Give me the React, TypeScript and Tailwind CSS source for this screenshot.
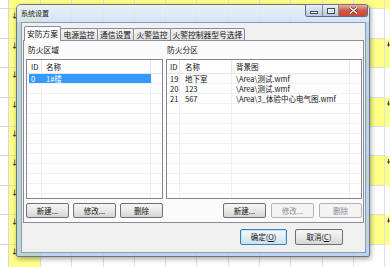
import React from 'react';

const CJK = "font-['Noto_Sans_CJK_SC','Noto_Sans',sans-serif]";

const partRows = [
  { id: '19', name: '地下室', bg: '\\Area\\测试.wmf' },
  { id: '20', name: '123', bg: '\\Area\\测试.wmf' },
  { id: '21', name: '567', bg: '\\Area\\3_体验中心电气图.wmf' },
];

const DownMark = () => (
  <svg width="3" height="5" viewBox="0 0 3 5">
    <path d="M1.5 0 V3.2" stroke="#333" strokeWidth="0.9" />
    <path d="M0 2.6 L1.5 5 L3 2.6 Z" fill="#333" />
  </svg>
);

const SheetRow: React.FC<{ yellow: boolean; first?: boolean }> = ({ yellow, first }) => {
  const cell = yellow ? 'bg-[#ffff88]' : 'bg-white';
  return (
    <div className="flex h-[29.4px] shrink-0">
      <div className="w-[9px] shrink-0 bg-white border-r border-b border-[#d4d8de]" />
      <div className="w-[32px] shrink-0 bg-[#ffff88] border-r border-b border-[#e2e2b4] pl-[2px] pt-[3px] text-[7px] leading-none font-bold text-[#333]">
        {first ? '' : '↓'}
      </div>
      {Array.from({ length: 11 }).map((_, j) => (
        <div key={j} className={`w-[31.3px] shrink-0 border-r border-b border-[#dcdfe4] ${cell}`} />
      ))}
      <div className={`w-[20px] shrink-0 pl-[1.5px] pt-[3px] flex items-start ${cell}`}>
        {yellow && !first ? <DownMark /> : null}
      </div>
    </div>
  );
};

const Btn: React.FC<{ children: React.ReactNode; disabled?: boolean }> = ({ children, disabled }) => (
  <div
    className={`w-[43px] h-[15px] flex items-center justify-center rounded-[2px] border text-[7.5px] leading-none ${
      disabled
        ? 'border-[#adb2b5] bg-[#f4f4f4] text-[#8a8a8a]'
        : 'border-[#707070] bg-gradient-to-b from-[#f6f6f6] via-[#e9e9e9] to-[#d5d5d5] text-[#111]'
    }`}
  >
    {children}
  </div>
);

const EmptyRow: React.FC<{ widths: string[] }> = ({ widths }) => (
  <div className="h-[10px] shrink-0 flex border-b border-[#f0f0f0]">
    {widths.map((w, i) => (
      <div key={i} className={`${w} shrink-0 border-r border-[#f0f0f0]`} />
    ))}
    <div className="flex-1" />
  </div>
);

const CaptionButtons = () => (
  <div className="flex h-[12px] border border-t-0 border-[#5d6c80] rounded-b-[3px] overflow-hidden">
    <div className="w-[17px] flex items-end justify-center pb-[2px] bg-gradient-to-b from-[#e9eff6] to-[#b7c8dc] border-r border-[#7f8fa3]">
      <svg width="8" height="3" viewBox="0 0 8 3">
        <rect x="0.5" y="0.5" width="7" height="2" fill="#fff" stroke="#3b4a5e" strokeWidth="1" />
      </svg>
    </div>
    <div className="w-[16px] flex items-center justify-center bg-gradient-to-b from-[#e9eff6] to-[#b7c8dc] border-r border-[#7f8fa3]">
      <svg width="8" height="6" viewBox="0 0 8 6">
        <rect x="0.5" y="0.5" width="7" height="5" fill="none" stroke="#3b4a5e" strokeWidth="1" />
        <rect x="1.5" y="1.5" width="5" height="3" fill="none" stroke="#fff" strokeWidth="1" />
      </svg>
    </div>
    <div className="w-[28px] flex items-center justify-center bg-gradient-to-b from-[#eab0a2] via-[#cf5845] to-[#c8493a]">
      <svg width="9" height="7" viewBox="0 0 9 7">
        <path d="M1 0.5 L8 6.5 M8 0.5 L1 6.5" stroke="#5a1a12" strokeWidth="2.6" />
        <path d="M1 0.5 L8 6.5 M8 0.5 L1 6.5" stroke="#fff" strokeWidth="1.5" />
      </svg>
    </div>
  </div>
);

const tabs = ['电源监控', '通信设置', '火警监控', '火警控制器型号选择'];

export default function App() {
  const leftCols = ['w-[15px]', 'w-[109px]'];
  const rightCols = ['w-[13px]', 'w-[52px]', 'w-[118px]'];

  return (
    <div className={`relative w-[390px] h-[267px] overflow-hidden bg-white ${CJK}`}>
      {/* spreadsheet behind the dialog */}
      <div className="flex flex-col mt-[-20px]">
        {Array.from({ length: 10 }).map((_, i) => (
          <SheetRow key={i} yellow={i % 2 === 0} first={i === 0} />
        ))}
      </div>

      {/* dialog window */}
      <div className="absolute left-[16px] top-[4px] w-[354px] h-[253px] flex flex-col rounded-t-[5px] rounded-b-[2px] border border-[#6a7787] bg-[#a6c6ec]/75 shadow-[1px_2px_5px_rgba(0,0,0,0.35)]">
        <div className="h-[17px] shrink-0 flex items-start rounded-t-[4px] bg-gradient-to-b from-white/70 to-white/35">
          <span className="pl-[4px] pt-[5px] text-[7px] leading-none text-[#1a1a1a]">系统设置</span>
          <div className="ml-auto mr-[1px]">
            <CaptionButtons />
          </div>
        </div>

        <div className="flex-1 ml-[4px] mr-[3px] mb-[3px] border border-[#8d9cae] bg-[#f0f0f0] flex flex-col">
          {/* tab strip */}
          <div className="h-[17px] shrink-0 flex items-end pl-[2px] pt-[3px]">
            <div className="relative z-10 -mb-px h-[15px] w-[37px] flex items-center justify-center border border-b-0 border-[#898c95] bg-white rounded-t-[2px] text-[7.75px] leading-none text-[#111]">
              安防方案
            </div>
            {tabs.map((t, i) => (
              <div
                key={t}
                className={`-ml-px h-[12px] flex items-center justify-center border border-b-0 border-[#898c95] bg-gradient-to-b from-[#f3f3f3] to-[#e3e3e3] rounded-t-[2px] text-[7.75px] leading-none text-[#111] ${
                  i === 3 ? 'w-[75px]' : i === 1 ? 'w-[37px]' : 'w-[38px]'
                }`}
              >
                {t}
              </div>
            ))}
          </div>

          {/* tab panel */}
          <div className="mx-[1px] h-[183px] shrink-0 border border-[#898c95] bg-[#fbfbfb] flex pl-[2px] pr-[1px] gap-[3px]">
            {/* left: zones */}
            <div className="w-[137px] flex flex-col">
              <div className="h-[18px] flex items-center pl-[2px] text-[7.75px] leading-none text-[#111]">防火区域</div>
              <div className="h-[140px] border border-[#828790] bg-white flex flex-col overflow-hidden text-[7.5px] leading-none text-[#111]">
                <div className="h-[14px] shrink-0 flex border-b border-[#e5e5e5]">
                  <div className="w-[15px] shrink-0 border-r border-[#e5e5e5] pl-[4px] flex items-center">ID</div>
                  <div className="w-[109px] shrink-0 border-r border-[#e5e5e5] pl-[4px] flex items-center">名称</div>
                  <div className="flex-1" />
                </div>
                <div className="h-[10px] shrink-0 flex border-b border-[#f0f0f0]">
                  <div className="w-[15px] shrink-0 pl-[2px]">
                    <div className="h-full bg-[#3399ff] text-white pl-[2px] flex items-center">0</div>
                  </div>
                  <div className="w-[109px] shrink-0 bg-[#3399ff] text-white pl-[4px] flex items-center">1#楼</div>
                  <div className="flex-1 border-l border-[#f0f0f0]" />
                </div>
                {Array.from({ length: 12 }).map((_, i) => (
                  <EmptyRow key={i} widths={leftCols} />
                ))}
              </div>
              <div className="mt-[4px] flex gap-[4px]">
                <Btn>新建...</Btn>
                <Btn>修改...</Btn>
                <Btn>删除</Btn>
              </div>
            </div>

            {/* right: partitions */}
            <div className="w-[196px] flex flex-col">
              <div className="h-[18px] flex items-center pl-[1px] text-[7.75px] leading-none text-[#111]">防火分区</div>
              <div className="h-[140px] border border-[#828790] bg-white flex flex-col overflow-hidden text-[7.5px] leading-none text-[#111]">
                <div className="h-[14px] shrink-0 flex border-b border-[#e5e5e5]">
                  <div className="w-[13px] shrink-0 border-r border-[#e5e5e5] pl-[3px] flex items-center">ID</div>
                  <div className="w-[52px] shrink-0 border-r border-[#e5e5e5] pl-[5px] flex items-center">名称</div>
                  <div className="w-[118px] shrink-0 border-r border-[#e5e5e5] pl-[4px] flex items-center">背景图</div>
                  <div className="flex-1" />
                </div>
                {partRows.map((r) => (
                  <div key={r.id} className="h-[10px] shrink-0 flex border-b border-[#f0f0f0]">
                    <div className="w-[13px] shrink-0 border-r border-[#f0f0f0] pl-[3px] flex items-center">{r.id}</div>
                    <div className="w-[52px] shrink-0 border-r border-[#f0f0f0] pl-[5px] flex items-center">{r.name}</div>
                    <div className="w-[118px] shrink-0 border-r border-[#f0f0f0] pl-[4px] flex items-center whitespace-nowrap">{r.bg}</div>
                    <div className="flex-1" />
                  </div>
                ))}
                {Array.from({ length: 10 }).map((_, i) => (
                  <EmptyRow key={i} widths={rightCols} />
                ))}
              </div>
              <div className="mt-[4px] flex justify-end gap-[5px]">
                <Btn>新建...</Btn>
                <Btn disabled>修改...</Btn>
                <Btn disabled>删除</Btn>
              </div>
            </div>
          </div>

          {/* dialog buttons */}
          <div className="mt-[6px] flex justify-end gap-[8px] pr-[22px]">
            <div className="w-[47px] h-[16px] flex items-center justify-center rounded-[2px] border border-[#3c7fb1] bg-gradient-to-b from-[#f4f9fc] via-[#e3eef6] to-[#cfe0ec] shadow-[inset_0_0_0_1px_#c2e6f9] text-[7.5px] leading-none text-[#111]">
              确定(<span className="underline">O</span>)
            </div>
            <div className="w-[48px] h-[16px] flex items-center justify-center rounded-[2px] border border-[#707070] bg-gradient-to-b from-[#f6f6f6] via-[#e9e9e9] to-[#d5d5d5] text-[7.5px] leading-none text-[#111]">
              取消(<span className="underline">C</span>)
            </div>
          </div>
        </div>
      </div>
    </div>
  );
}
